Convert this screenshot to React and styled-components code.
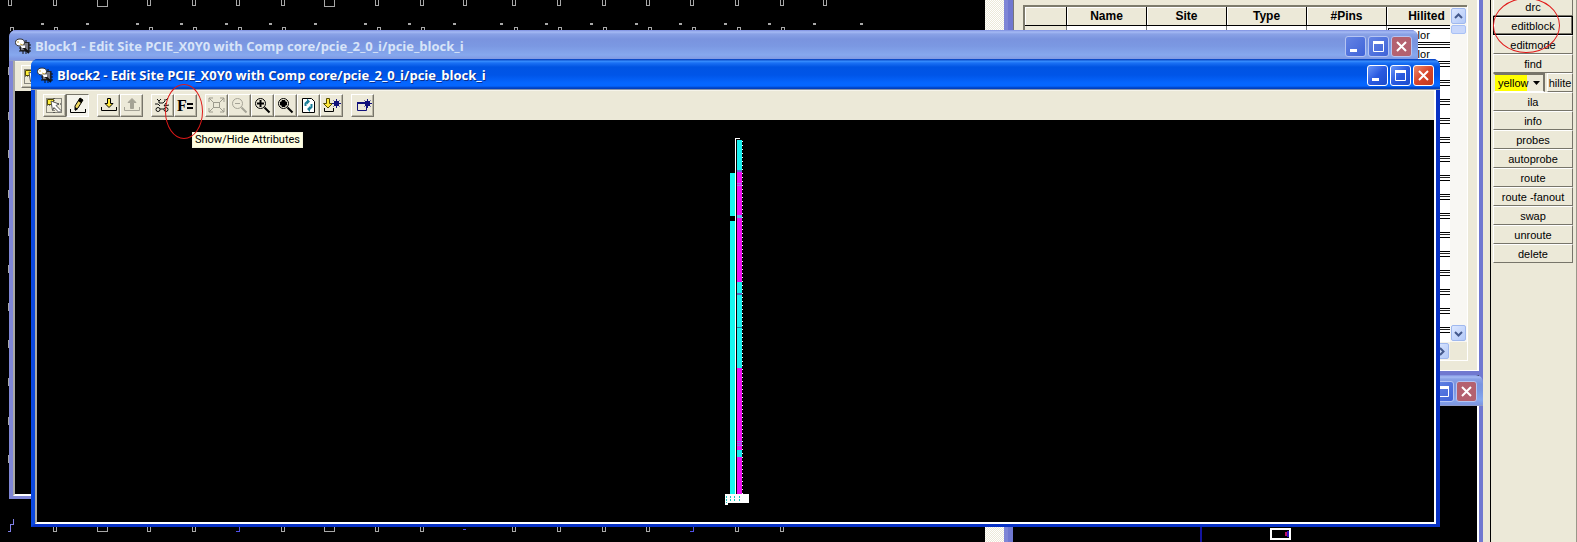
import styled, { createGlobalStyle } from "styled-components";

const GlobalStyle = createGlobalStyle`
    * {
        box-sizing: border-box;
    }

    body {
        margin: 0;
        background: #000;
        font-family: "Liberation Sans", Arial, sans-serif;
        font-size: 11px;
        overflow: hidden;
    }

    button,
    select {
        margin: 0;
        padding: 0;
        border-radius: 0;
        font: inherit;
        color: #000;
    }
`;

const Desktop = styled.main`
    position: relative;
    display: flex;
    height: 100vh;
    overflow: hidden;
`;

const ArrayView = styled.section`
    flex: 1;
    min-width: 0;
    display: flex;
    border-right: 4px solid #7f86d6;
    background: #000;

    svg {
        flex: 1;
        min-width: 0;
        height: 100%;
    }
`;

const ArrayScroll = styled.div`
    width: 19px;
    background: repeating-conic-gradient(#fff 0 25%, #ece9d8 0 50%) 0 0 / 2px 2px;
`;

const RightColumn = styled.div`
    width: 475px;
    display: flex;
    flex-direction: column;
    box-shadow: inset 1px 0 #4048b8;
`;

const ListWindow = styled.section`
    height: 375px;
    display: flex;
    border: solid #7078d0;
    border-width: 0 4px 4px 5px;
    background: #ece9d8;
    box-shadow: inset 1px 0 #777, inset -2px -1px #fff;
`;

const ListFrame = styled.div`
    flex: 1;
    display: grid;
    grid-template-columns: 1fr 17px;
    grid-template-rows: 1fr 18px;
    margin: 5px 12px 11px 10px;
    border: solid #7d7b6c;
    border-width: 2px 0 0 2px;
    box-shadow: 1px 1px #fff;
    min-width: 0;
`;

const TableClip = styled.div`
    overflow: hidden;
    background: #fff;
`;

const CompTable = styled.table`
    width: 100%;
    border-collapse: separate;
    border-spacing: 0;
    table-layout: fixed;

    th {
        height: 19px;
        padding: 0;
        border: solid #000;
        border-width: 0 1px 1px 0;
        box-shadow: inset 1px 1px #fff;
        background: #ece9d8;
        font-size: 12px;
        line-height: 16px;
    }

    th:first-child {
        width: 42px;
    }

    th:last-child {
        width: 63px;
        padding-left: 16px;
        border-right: 0;
    }

    td {
        height: 19px;
        padding: 1px 0 0 1px;
        border: solid #777;
        border-width: 0 1px 1px 0;
    }

    td:first-child {
        background: #ece9d8;
    }

    td:last-child {
        border-right: 0;
        border-bottom: 1px solid #222;
    }
`;

const ColorSelect = styled.select`
    display: block;
    width: 100%;
    height: 15px;
    padding-left: 17px;
    appearance: none;
    border: 1px solid #000;
    border-right: 0;
    background: #fff;
    line-height: 13px;
`;

const ScrollBar = styled.div`
    display: flex;
    flex-direction: ${(p) => (p.$horizontal ? "row" : "column")};
    justify-content: space-between;
    align-items: center;
    padding: 1px;
    background: ${(p) => (p.$horizontal ? "#f3f1ea" : "#f8f7f3")};
`;

const ScrollThumb = styled.div`
    width: 15px;
    height: 9px;
    margin: 1px 0 auto;
    border: 1px solid #a9c1f5;
    border-radius: 2px;
    background: #c8d7fb;
`;

const ScrollButton = styled.button`
    width: 15px;
    height: 16px;
    display: flex;
    align-items: center;
    justify-content: center;
    border: 1px solid #9fb8ee;
    border-radius: 2px;
    background: linear-gradient(135deg, #dce7ff, #b3c9f8);
    margin-left: ${(p) => (p.$end ? "auto" : 0)};

    svg {
        width: 9px;
        height: 9px;
        transform: rotate(${(p) => p.$turn || 0}deg);
    }
`;

const WorldWindow = styled.section`
    flex: 1;
    min-height: 0;
    display: flex;
    flex-direction: column;
    border: solid #7078d0;
    border-width: 0 4px 0 5px;
`;

const WorldView = styled.div`
    flex: 1;
    min-height: 0;
    border-right: 2px solid #fff;
    background: #000;

    svg {
        display: block;
    }
`;

const Palette = styled.aside`
    width: 94px;
    padding-right: 1px;
    display: flex;
    border-left: 7px solid #ece9d8;
    background: #fff;
`;

const CommandList = styled.nav`
    flex: 1;
    min-width: 0;
    display: flex;
    flex-direction: column;
    padding: 0 3px 0 2px;
    border: solid #000;
    border-width: 0 0 0 1px;
    background: #ece9d8;
    box-shadow: 1px 0 #9a9789;

    > :first-child {
        margin-top: -3px;
    }
`;

const Command = styled.button`
    height: 19px;
    flex: ${(p) => (p.$fill ? 1 : "none")};
    min-width: 0;
    overflow: hidden;
    border: ${(p) => (p.$current ? "1px solid #000" : "1px solid")};
    border-color: ${(p) => (p.$current ? "#000" : "#fff #77756a #77756a #fff")};
    background: #ece9d8;
    box-shadow: ${(p) => (p.$current ? "inset -1px -1px #77756a, inset 1px 1px #fff" : "none")};
    line-height: 16px;
    white-space: nowrap;
`;

const HiliteRow = styled.div`
    display: flex;
    gap: 2px;
`;

const HiliteBox = styled.div`
    position: relative;
    width: 52px;

    svg {
        position: absolute;
        right: 5px;
        top: 8px;
        pointer-events: none;
    }
`;

const HiliteSelect = styled.select`
    display: block;
    width: 100%;
    height: 19px;
    padding: 1px 0 0 3px;
    appearance: none;
    border: solid;
    border-width: 2px 2px 1px;
    border-color: #77756a #77756a #fff #ece9d8;
    background: linear-gradient(90deg, #ff0 32px, #ece9d8 32px);
    line-height: 15px;
`;

// windows float over the desktop and keep their distance from its edges
const BlockWindow = styled.section`
    position: absolute;
    top: ${(p) => p.$top}px;
    right: ${(p) => p.$right}px;
    bottom: ${(p) => p.$bottom}px;
    left: ${(p) => p.$left}px;
    display: flex;
    flex-direction: column;
    border: solid ${(p) => (p.$active ? "#0831c4" : "#7f86d6")};
    border-width: 0 4px 3px 4px;
    border-left-color: ${(p) => (p.$active ? "#0a48e0" : "#7f86d6")};
    border-radius: 7px 7px 0 0;
    background: ${(p) => (p.$active ? "#0831c4" : "#7f86d6")};
`;

const Caption = styled.header`
    flex: none;
    height: 31px;
    margin: 0 -4px;
    padding: 2px 6px 0;
    display: flex;
    align-items: center;
    gap: 4px;
    border-radius: 7px 7px 0 0;
    border-bottom: 1px solid ${(p) => (p.$active ? "#8a94a8" : "#8f9cc8")};
    background: ${(p) =>
        p.$active
            ? "linear-gradient(#0a4ac8 0, #0a4ac8 1px, #3a90ff 2px, #1a70f4 4px, #0054e3 8px, #0055e8 16px, #0566ff 24px, #0566ff 27px, #0040c0 29px)"
            : "linear-gradient(#7d8fe0 0, #a5baf4 2px, #8aa2e6 4px, #7a94df 9px, #7b98e2 16px, #86a8ee 25px, #7f98e2 29px)"};
    color: ${(p) => (p.$active ? "#fff" : "#d8e4f8")};

    h2 {
        flex: 1;
        margin: 0;
        font-family: "Open Sans", "Noto Sans", sans-serif;
        font-size: 13px;
        font-weight: 700;
        line-height: 20px;
        white-space: nowrap;
        text-shadow: ${(p) => (p.$active ? "1px 1px #0a2f8c" : "none")};
    }
`;

const CaptionButtons = styled.div`
    display: flex;
    gap: 2px;
    margin-left: auto;
`;

const CaptionButton = styled.button`
    width: 21px;
    height: 21px;
    border: 1px solid ${(p) => (p.$dim ? "#b5c4f2" : "#fff")};
    border-radius: 3px;
    background: ${(p) => {
        if (p.$close) return p.$dim ? "#b4616f" : "linear-gradient(135deg, #ee8a6a, #d8452a 50%, #c03a1c)";
        return p.$dim ? "linear-gradient(135deg, #6484e4, #3f63d8)" : "linear-gradient(135deg, #6a96f8, #2a5ae0 50%, #1c4ccc)";
    }};

    svg {
        display: block;
        width: 19px;
        height: 19px;
    }
`;

const WindowBody = styled.div`
    flex: 1;
    min-height: 0;
    display: flex;
    flex-direction: column;
    border: solid #fff;
    border-width: 0 2px 2px 2px;
    border-left-color: #a9a9a4;
    background: #000;
`;

const Toolbar = styled.div`
    flex: none;
    display: flex;
    gap: 8px;
    padding: 3px 6px;
    border-top: 1px solid #f6f4ea;
    background: #ece9d8;
`;

const ToolGroup = styled.div`
    display: flex;
`;

const ToolButton = styled.button`
    width: 23px;
    height: 23px;
    border: 1px solid;
    border-color: ${(p) => (p.$pressed ? "#77756a #fff #fff #77756a" : "#fff #77756a #77756a #fff")};
    background: ${(p) => (p.$pressed ? "#f5f4ec" : "#ece9d8")};
    box-shadow: ${(p) => (p.$pressed ? "none" : "inset -1px -1px #b9b6a6")};

    svg {
        display: block;
        width: 21px;
        height: 21px;
    }

    text {
        font: bold 16px "Liberation Serif", "Times New Roman", serif;
    }
`;

const BlockView = styled.div`
    flex: 1;
    min-height: 0;
    padding-top: 18px;
    text-align: center;
    overflow: hidden;
`;

const Tooltip = styled.div`
    position: absolute;
    top: 132px;
    left: 192px;
    padding: 0 2px;
    border: 1px solid #f4f3dc;
    background: #ffffe1;
    font-family: Roboto, "Noto Sans", sans-serif;
    font-size: 11px;
    line-height: 14px;
    white-space: nowrap;
`;

const Highlight = styled.div`
    position: absolute;
    top: ${(p) => p.$top}px;
    left: ${(p) => p.$left};
    right: ${(p) => p.$right};
    width: ${(p) => p.$width}px;
    height: 55px;
    border: 1px solid #e01818;
    border-radius: 50%;
    pointer-events: none;
`;

const Chevron = () => (
    <svg viewBox="0 0 9 9">
        <path d="M1 6 4.500 2.500 8 6" fill="none" stroke="#44598c" strokeWidth="2" />
    </svg>
);

const ChipIcon = () => (
    <svg width="16" height="16" viewBox="0 0 16 16">
        <path d="M8 2v14M11 2v14M14 4v10M4 7h12M4 10h12M4 13h12" stroke="#111" />
        <rect x="5.500" y="4.500" width="8" height="8" fill="#7b7b86" stroke="#222" />
        <path d="M6 7l8 8" stroke="#111" strokeWidth="2" />
        <ellipse cx="5" cy="4.500" rx="4.500" ry="3.500" fill="#fff" stroke="#333" />
        <path d="M2 4h2M5 6l3 1" stroke="#c8a848" />
        <path d="M5 7.500h5v2.500H7z" fill="#fff" />
    </svg>
);

const Plunger = ({ fill, line }) => (
    <g fill={fill} stroke={line}>
        <path d="M9.500 3.500h3v5h2.500l-4 4-4-4h2.500z" />
        <path d="M3.500 12v3.500h15V12" fill="none" />
    </g>
);

const Lens = ({ line, children }) => (
    <g fill="none" stroke={line}>
        <circle cx="8.500" cy="8.500" r="5" />
        <path d="M12.500 12.500l5 5" strokeWidth="2" />
        {children}
    </g>
);

const ChipMark = () => (
    <g stroke="#10107a" fill="none">
        <rect x="13.500" y="6.500" width="4" height="4" />
        <path d="M11 8.500h9M15.500 4v9M12.500 5.500l6 6M18.500 5.500l-6 6" />
    </g>
);

const icons = {
    select: (
        <g>
            <rect x="2.500" y="3.500" width="15" height="14" fill="none" stroke="#222" strokeDasharray="1 1" />
            <path d="M10 3v6h8M10 18v-5M3 10h6" stroke="#222" fill="none" strokeDasharray="1 1" />
            <path d="M3.500 4.500h6v5h-6z" fill="#ffef3a" stroke="#554c00" />
            <path d="M7 6l8 3-3 1.500 5 5-2 2-5-5-1.500 3z" fill="#fff" stroke="#555" />
        </g>
    ),
    edit: (
        <g>
            <path d="M3.500 14v3.500h15V14" fill="none" stroke="#000" />
            <path d="M13 3l3 2-5 8-3 2v-4z" fill="#f0d860" stroke="#000" />
            <path d="M13 3l3 2-2 3-3-2z" fill="#000" />
            <path d="M8 12v4l3-2z" fill="#000" />
        </g>
    ),
    download: <Plunger fill="#ffe93a" line="#000" />,
    upload: (
        <g fill="#a5a396" stroke="#a5a396">
            <path d="M9.500 13.500h3v-6h2.500l-4-4-4 4h2.500z" />
            <path d="M3.500 12v3.500h15V12" fill="none" />
        </g>
    ),
    nets: (
        <g fill="none" stroke="#111">
            <path d="M5 4l2 2 2-2M12 5h2l2-2M7 6v2h4l2-2M3 9h3l2 2" />
            <circle cx="6" cy="14.500" r="2" />
            <circle cx="14" cy="14.500" r="2" />
            <path d="M8 14h4M14 8l-2 3 5-1" />
        </g>
    ),
    attributes: (
        <g>
            <text x="2" y="16">F</text>
            <path d="M12 9h6M12 13h6" stroke="#000" strokeWidth="2" />
        </g>
    ),
    fit: (
        <g fill="none" stroke="#9d9b8e">
            <rect x="7.500" y="7.500" width="6" height="5" />
            <path d="M3 7V3h4M14 3h4v4M18 13v4h-4M7 17H3v-4M3 3l5 5M18 3l-5 5M3 17l5-5M18 17l-5-5" />
        </g>
    ),
    zoomOut: (
        <Lens line="#a5a396">
            <path d="M6 8.500h5" />
        </Lens>
    ),
    zoomIn: (
        <Lens line="#000">
            <path d="M5 8.500h7M8.500 5v7" strokeWidth="2" />
        </Lens>
    ),
    zoomSel: (
        <Lens line="#000">
            <path d="M5.500 7h1.500V5.500h3V7h1.500v3H10v1.500H7V10H5.500z" fill="#000" />
        </Lens>
    ),
    refresh: (
        <g>
            <path d="M4.500 3.500h9l3 3v11h-12z" fill="#fff" stroke="#000" />
            <path d="M7.500 11V8.500l2-2M13.500 9v3l-2 2" fill="none" stroke="#1b7f98" strokeWidth="2" />
            <path d="M9 3.500v6l3-3zM12 11v6l-3-3z" fill="#1b7f98" />
        </g>
    ),
    loadComp: (
        <g>
            <path d="M5.500 3.500h3v5h3l-4.500 4.500-4.500-4.500h3z" fill="#ffe93a" stroke="#554c00" />
            <path d="M3.500 13v3.500h9V13" fill="none" stroke="#000" />
            <ChipMark />
        </g>
    ),
    addComp: (
        <g>
            <path d="M5.500 7.500h9v8h-9z" fill="#ece9d8" stroke="#10107a" />
            <path d="M5 8h9" stroke="#10107a" strokeWidth="2" />
            <ChipMark />
        </g>
    ),
};

const toolGroups = [
    [
        { icon: "select", label: "Select" },
        { icon: "edit", label: "Edit mode", pressed: true },
    ],
    [
        { icon: "download", label: "Apply" },
        { icon: "upload", label: "Revert", disabled: true },
    ],
    [
        { icon: "nets", label: "Show nets" },
        { icon: "attributes", label: "Show/Hide Attributes" },
    ],
    [
        { icon: "fit", label: "Zoom to fit", disabled: true },
        { icon: "zoomOut", label: "Zoom out", disabled: true },
        { icon: "zoomIn", label: "Zoom in" },
        { icon: "zoomSel", label: "Zoom to selection" },
        { icon: "refresh", label: "Refresh" },
        { icon: "loadComp", label: "Load component" },
    ],
    [{ icon: "addComp", label: "Add component" }],
];

const commandsTop = ["drc", "editblock", "editmode", "find"];
const commandsBottom = [
    "ila",
    "info",
    "probes",
    "autoprobe",
    "route",
    "route -fanout",
    "swap",
    "unroute",
    "delete",
];

const columns = ["", "Name", "Site", "Type", "#Pins", "Hilited"];

function WindowCaption({ title, active }) {
    return (
        <Caption $active={active}>
            {title && <ChipIcon />}
            {title && <h2>{title}</h2>}
            <CaptionButtons>
                <CaptionButton aria-label="Minimize" $dim={!active}>
                    <svg viewBox="0 0 19 19">
                        <path d="M4 13.500h7" stroke="#fff" strokeWidth="3" />
                    </svg>
                </CaptionButton>
                <CaptionButton aria-label="Maximize" $dim={!active}>
                    <svg viewBox="0 0 19 19">
                        <path d="M4.500 5.500h10v9h-10z" fill="none" stroke="#fff" />
                        <path d="M4 5.500h11" stroke="#fff" strokeWidth="3" />
                    </svg>
                </CaptionButton>
                <CaptionButton aria-label="Close" $close $dim={!active}>
                    <svg viewBox="0 0 19 19">
                        <path d="M5 5l9 9M14 5l-9 9" stroke="#fff" strokeWidth="2" />
                    </svg>
                </CaptionButton>
            </CaptionButtons>
        </Caption>
    );
}

function BlockToolbar({ groups }) {
    return (
        <Toolbar role="toolbar">
            {groups.map((group) => (
                <ToolGroup key={group[0].icon}>
                    {group.map((tool) => (
                        <ToolButton
                            key={tool.icon}
                            aria-label={tool.label}
                            disabled={tool.disabled}
                            $pressed={tool.pressed}
                        >
                            <svg viewBox="0 0 21 21">{icons[tool.icon]}</svg>
                        </ToolButton>
                    ))}
                </ToolGroup>
            ))}
        </Toolbar>
    );
}

// [y, height, colour] of the pin column, from the top of the block
const pinRuns = [
    [2, 30, "#18f0f0"],
    [32, 2, "#6a6ad8"],
    [34, 43, "#ee10ee"],
    [45, 1, "#b070f0"],
    [47, 1, "#b070f0"],
    [77, 3, "#60b0f0"],
    [80, 64, "#ee10ee"],
    [144, 86, "#18f0f0"],
    [155, 2, "#5070c8"],
    [189, 1, "#2080a0"],
    [230, 126, "#ee10ee"],
    [303, 1, "#9070f0"],
    [305, 1, "#9070f0"],
    [307, 1, "#9070f0"],
    [312, 7, "#18e8f0"],
];

function BlockDrawing() {
    return (
        <svg width="29" height="370" viewBox="0 0 29 370" shapeRendering="crispEdges">
            <path d="M9 35h5v43H9zM9 83h5v273H9z" fill="#18f8f0" />
            <path d="M14.500 356V.5h4" fill="none" stroke="#fff" />
            {pinRuns.map(([y, h, fill]) => (
                <rect key={y} x="16" y={y} width="5" height={h} fill={fill} />
            ))}
            <path d="M21.500 3v353" stroke="#fff" strokeDasharray="1 3" />
            <path d="M4 356h24v9H7v2H4z" fill="#fff" />
            <path d="M5.500 358v7M9.500 358v6M13.500 358v6M18.500 358v6" stroke="#18c8c0" strokeDasharray="2 1" />
        </svg>
    );
}

const topPins = [8, 53, 147, 192, 236, 281, 375, 420, 463, 512, 557, 602, 646, 690, 735, 780, 823];
const dots = [41, 86, 136, 180, 225, 269, 314, 364, 408, 453, 500, 545, 590, 635, 679, 724, 768, 813, 860];
const lowPins = [10, 54, 149, 193, 238, 282, 377, 421, 514, 558, 603, 648, 692, 737, 781];
const bottomPins = [53, 147, 192, 281, 375, 420, 512, 557, 602, 646, 735, 780];
const wideSites = [97, 324];
const edgeTicks = [67, 112, 150, 190, 228, 265, 303, 340, 378, 417, 455];

function ArrayDrawing() {
    return (
        <svg shapeRendering="crispEdges" fill="none" stroke="#a8a8a8">
            {topPins.map((x) => (
                <path key={x} d={`M${x + 0.5} 0v5.500h3V0`} />
            ))}
            {dots.map((x) => (
                <path key={x} d={`M${x} 24h3`} strokeWidth="2" />
            ))}
            {lowPins.map((x) => (
                <path key={x} d={`M${x + 0.5} 31v-3.500h3V31`} />
            ))}
            {wideSites.map((x) => (
                <g key={x}>
                    <path d={`M${x + 0.5} 0v6h10V0`} />
                    <path d={`M${x + 0.5} 527v4h10v-4`} />
                </g>
            ))}
            {bottomPins.map((x) => (
                <path key={x} d={`M${x + 0.5} 527v4.500h3V527`} />
            ))}
            {edgeTicks.map((y) => (
                <path key={y} d={`M8.500 ${y}v8`} />
            ))}
            <path d="M236 531.500h3.500V527M690 531.500h3.500V527M463 529.500h3" stroke="#5050e8" />
            <path d="M13.500 519v5h-3v7.500H8" stroke="#8080e8" />
        </svg>
    );
}

function ComponentList() {
    return (
        <ListWindow>
            <ListFrame>
                <TableClip>
                    <CompTable>
                        <thead>
                            <tr>
                                {columns.map((name) => (
                                    <th key={name}>{name}</th>
                                ))}
                            </tr>
                        </thead>
                        <tbody>
                            {Array.from({ length: 17 }, (_, row) => (
                                <tr key={row}>
                                    <td />
                                    <td />
                                    <td />
                                    <td />
                                    <td />
                                    <td>
                                        <ColorSelect aria-label={`Hilite ${row + 1}`}>
                                            <option>color</option>
                                        </ColorSelect>
                                    </td>
                                </tr>
                            ))}
                        </tbody>
                    </CompTable>
                </TableClip>
                <ScrollBar>
                    <ScrollButton aria-label="Scroll up">
                        <Chevron />
                    </ScrollButton>
                    <ScrollThumb />
                    <ScrollButton aria-label="Scroll down" $turn={180}>
                        <Chevron />
                    </ScrollButton>
                </ScrollBar>
                <ScrollBar $horizontal>
                    <ScrollButton aria-label="Scroll right" $turn={90} $end>
                        <Chevron />
                    </ScrollButton>
                </ScrollBar>
            </ListFrame>
        </ListWindow>
    );
}

function App() {
    return (
        <Desktop>
            <GlobalStyle />
            <ArrayView>
                <ArrayDrawing />
                <ArrayScroll />
            </ArrayView>
            <RightColumn>
                <ComponentList />
                <WorldWindow>
                    <WindowCaption />
                    <WorldView>
                        <svg width="100%" height="136" shapeRendering="crispEdges">
                            <path d="M188 0v136" stroke="#1414a0" strokeWidth="2" />
                            <path d="M258 123h19v10h-19z" fill="none" stroke="#fff" strokeWidth="2" />
                            <path d="M273 126v4" stroke="#c01060" strokeWidth="2" />
                            <path d="M275 125v6" stroke="#3010c0" strokeWidth="2" />
                        </svg>
                    </WorldView>
                </WorldWindow>
            </RightColumn>
            <Palette>
                <CommandList>
                    {commandsTop.map((name) => (
                        <Command key={name} $current={name === "editblock"}>
                            {name}
                        </Command>
                    ))}
                    <HiliteRow>
                        <HiliteBox>
                            <HiliteSelect aria-label="Hilite color">
                                <option>yellow</option>
                            </HiliteSelect>
                            <svg width="7" height="4" viewBox="0 0 7 4">
                                <path d="M0 0h7L3.500 4z" />
                            </svg>
                        </HiliteBox>
                        <Command $fill>hilite</Command>
                    </HiliteRow>
                    {commandsBottom.map((name) => (
                        <Command key={name}>{name}</Command>
                    ))}
                </CommandList>
            </Palette>

            <BlockWindow $top={30} $right={159} $bottom={43} $left={9}>
                <WindowCaption title="Block1 - Edit Site PCIE_X0Y0 with Comp core/pcie_2_0_i/pcie_block_i" />
                <WindowBody>
                    <BlockToolbar groups={toolGroups.slice(0, 1)} />
                </WindowBody>
            </BlockWindow>
            <BlockWindow $active $top={59} $right={137} $bottom={15} $left={31}>
                <WindowCaption
                    active
                    title="Block2 - Edit Site PCIE_X0Y0 with Comp core/pcie_2_0_i/pcie_block_i"
                />
                <WindowBody>
                    <BlockToolbar groups={toolGroups} />
                    <BlockView>
                        <BlockDrawing />
                    </BlockView>
                </WindowBody>
            </BlockWindow>

            <Tooltip role="tooltip">Show/Hide Attributes</Tooltip>
            <Highlight $top={84} $left="165px" $right="auto" $width={38} />
            <Highlight $top={-2} $left="auto" $right="17px" $width={67} />
        </Desktop>
    );
}

export default App;
